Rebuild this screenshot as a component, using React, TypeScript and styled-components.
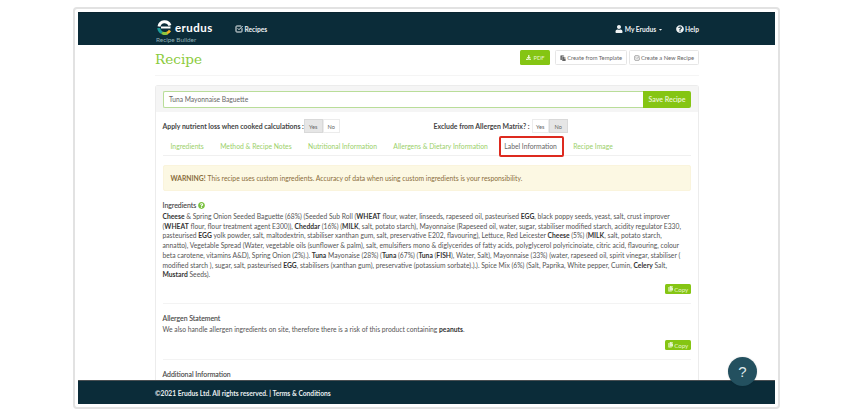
import React from "react";
import styled, { createGlobalStyle } from "styled-components";
import { FaUser, FaQuestionCircle, FaDownload, FaCopy, FaPaste, FaCaretDown } from "react-icons/fa";
import { SquareCheckBig } from "lucide-react";

const Global = createGlobalStyle`
  html, body { margin: 0; padding: 0; background: #fff; }
  * { box-sizing: border-box; }
  #root { width: 858px; height: 412px; overflow: hidden; font-family: "Lato", "Liberation Sans", sans-serif; }
`;
const Page = styled.div`
  width: 858px; height: 412px; padding: 7px 78px 3px 73px;
`;
const Frame = styled.div`
  width: 100%; height: 100%; border: 2px solid #e2e2e2; border-radius: 4px; padding: 3px;
  background: #fff;
`;
const Screen = styled.div`
  position: relative; height: 100%; display: flex; flex-direction: column; overflow: hidden;
`;
const Header = styled.header`
  flex: none; height: 33px; background: #0b2c39; display: flex; align-items: center;
  padding: 0 76px 0 79px; color: #f2f5f6; border-top: 1px solid #0a2531;
`;
const Brand = styled.div`
  display: flex; flex-direction: column; width: 78px; margin-top: 6px;
`;
const LogoRow = styled.div`
  display: flex; align-items: center; gap: 3px; height: 14px;
`;
const LogoWord = styled.span`
  font-size: 11.5px; font-weight: 700; letter-spacing: 0.45px; color: #fff; line-height: 14px;
`;
const BrandSub = styled.span`
  font-size: 6.4px; line-height: 8px; color: #8fb0b5; margin-top: 1px; margin-left: -1px;
`;
const NavLink = styled.span`
  display: inline-flex; align-items: center; gap: 1.5px; font-size: 6.6px; font-weight: 700; color: #f0f3f4;
  svg { flex: none; }
`;
const Spacer = styled.div`flex: 1;`;
const RightNav = styled.div`
  display: flex; align-items: center; gap: 13px;
`;
const Main = styled.main`
  flex: 1; min-height: 0; overflow: hidden; padding: 0 76px 0 77px;
`;
const TitleRow = styled.div`
  display: flex; justify-content: space-between; align-items: flex-start;
  height: 30px; padding-top: 5px;
`;
const Title = styled.h1`
  margin: 0; font-family: "DejaVu Serif", "Liberation Serif", serif; font-weight: 400; font-size: 13.6px;
  line-height: 18px; color: #8ccb3d;
`;
const Actions = styled.div`
  display: flex; align-items: center;
`;
const PdfButton = styled.span`
  display: inline-flex; align-items: center; gap: 2px; height: 15px; padding: 0 5.5px; background: #85c513; color: #e8f5cd;
  border-radius: 1.5px; font-size: 5.8px; margin-right: 3px;
`;
const GhostButton = styled.span`
  display: inline-flex; align-items: center; gap: 1px; height: 15px; padding: 0 4px; background: #fff; color: #666;
  border: 1px solid #e6e6e6; border-radius: 1.5px; font-size: 5.8px; margin-left: 2px;
`;
const TitleRule = styled.div`
  height: 1px; background: #f5f5f5; margin-bottom: 9px;
`;
const Panel = styled.section`
  border: 1px solid #ececec; border-bottom: 0; border-radius: 3px 3px 0 0; height: 320px;
`;
const PanelHead = styled.div`
  height: 26px; background: #f5f5f5; padding: 5px 7px 0; display: flex;
`;
const NameBox = styled.div`
  flex: 1; height: 16.5px; background: #fff; border: 1px solid #b9dd99; border-right: 0; border-radius: 2px 0 0 2px;
  font-size: 6.7px; line-height: 14.5px; padding-left: 5px; color: #666;
`;
const SaveButton = styled.span`
  width: 48px; height: 16.5px; background: #85c513; color: #e4f4c8; font-size: 7px; font-weight: 700;
  border-radius: 0 2px 2px 0; display: flex; align-items: center; justify-content: center;
`;
const PanelBody = styled.div`
  padding: 7px 7px 0 6.5px;
`;
const OptionRow = styled.div`
  display: flex; height: 14px; align-items: center;
`;
const OptionLabel = styled.span<{ $width: number }>`
  width: ${(p) => p.$width}px; font-size: 6.9px; font-weight: 700; color: #444; white-space: nowrap;
  text-align: right; flex: none;
`;
const Toggle = styled.div`
  display: flex; margin-left: 2px; flex: none;
`;
const ToggleItem = styled.span<{ $on?: boolean }>`
  width: ${(p) => (p.$on ? 18.5 : 17.5)}px; height: 14px; font-size: 5.6px; display: flex; align-items: center; justify-content: center;
  color: #666; border: 1px solid ${(p) => (p.$on ? "#d9d9d9" : "#ececec")}; background: ${(p) => (p.$on ? "#e6e6e6" : "#fff")};
`;
const Tabs = styled.nav`
  display: flex; height: 21px; margin-top: 2px; border-bottom: 1px solid #f0f0f0; position: relative;
`;
const Tab = styled.span<{ $active?: boolean }>`
  padding: 0 8px; font-size: 6.8px; line-height: 22px; height: 20px; white-space: nowrap; color: ${(p) => (p.$active ? "#666" : "#9bd06a")};
  margin-right: 0.4px; flex: none;
`;
const Highlight = styled.span`
  position: absolute; left: 336.5px; top: 1px; width: 65px; height: 21px; border: 2px solid #dd2a1f; border-radius: 2px;
`;
const Alert = styled.div`
  margin-top: 9px; height: 26px; background: #fcf8e3; border: 1px solid #faf4dc; border-radius: 2px; padding: 0 7px;
  display: flex; align-items: center; font-size: 6.78px; color: #8a6d3b; gap: 2px;
  strong { font-weight: 700; }
`;
const Section = styled.div<{ $height: number; $rule?: boolean }>`
  height: ${(p) => p.$height}px; border-bottom: ${(p) => (p.$rule === false ? "0" : "1px solid #f3f3f3")};
  padding-top: 9.5px; position: relative;
`;
const SectionTitle = styled.h4`
  margin: 0; display: flex; align-items: center; gap: 2px; font-size: 6.9px; line-height: 9px; font-weight: 400; color: #444;
  -webkit-text-stroke: 0.1px #444;
`;
const Body = styled.p`
  margin: 2.5px 0 0; font-size: 6.74px; line-height: 9.7px; color: #555; white-space: pre-line; width: 535px;
  b { font-weight: 700; color: #333; }
`;
const CopyButton = styled.span`
  position: absolute; right: 0; bottom: 9px; width: 26px; height: 10px; background: #85c513; color: #e4f4c8; font-size: 6.2px;
  border-radius: 1.5px; display: flex; align-items: center; justify-content: center; gap: 1px;
`;
const Footer = styled.footer`
  flex: none; height: 24px; background: #0b2c39; border-top: 1px solid #4a4f52; padding-left: 77px; display: flex; align-items: center;
  font-size: 6.7px; font-weight: 700; color: #e9eef0;
`;
const HelpBubble = styled.span`
  position: absolute; right: 18px; bottom: 18px; width: 29px; height: 29px; border-radius: 50%; background: #23505f;
  color: #dfe9ec; font-size: 15px; display: flex; align-items: center; justify-content: center;
  box-shadow: 0 0 2px rgba(0,0,0,.15);
  font-family: "Liberation Sans", sans-serif;
`;

const Logo = () => (
  <svg width="15" height="15" viewBox="0 0 30 30">
    <path d="M4 13 A11.5 11.5 0 0 1 26 11" fill="none" stroke="#fff" strokeWidth="6" />
    <path d="M8 15 H27" stroke="#fff" strokeWidth="4" />
    <path d="M3.5 16 A11.5 11.5 0 0 0 10 25.5" fill="none" stroke="#1d9c9c" strokeWidth="6" />
    <path d="M10 25.5 A11.5 11.5 0 0 0 21 26" fill="none" stroke="#8cc63f" strokeWidth="6" />
    <path d="M20 26 A11.5 11.5 0 0 0 26 21" fill="none" stroke="#f0b323" strokeWidth="5" />
  </svg>
);

export default function App() {
  return (
    <Page>
      <Global />
      <Frame>
        <Screen>
          <Header>
            <Brand>
              <LogoRow><Logo /><LogoWord>erudus</LogoWord></LogoRow>
              <BrandSub>Recipe Builder</BrandSub>
            </Brand>
            <NavLink><SquareCheckBig size={8} strokeWidth={3} />Recipes</NavLink>
            <Spacer />
            <RightNav>
              <NavLink><FaUser size={8} />My Erudus<FaCaretDown size={5} /></NavLink>
              <NavLink><FaQuestionCircle size={8} />Help</NavLink>
            </RightNav>
          </Header>
          <Main>
            <TitleRow>
              <Title>Recipe</Title>
              <Actions>
                <PdfButton><FaDownload size={5.5} />PDF</PdfButton>
                <GhostButton><FaPaste size={6} />Create from Template</GhostButton>
                <GhostButton><SquareCheckBig size={6} strokeWidth={2.5} />Create a New Recipe</GhostButton>
              </Actions>
            </TitleRow>
            <TitleRule />
            <Panel>
              <PanelHead>
                <NameBox>Tuna Mayonnaise Baguette</NameBox>
                <SaveButton>Save Recipe</SaveButton>
              </PanelHead>
              <PanelBody>
                <OptionRow>
                  <OptionLabel $width={139.5}>Apply nutrient loss when cooked calculations :</OptionLabel>
                  <Toggle><ToggleItem $on>Yes</ToggleItem><ToggleItem>No</ToggleItem></Toggle>
                  <OptionLabel $width={189.5}>Exclude from Allergen Matrix? :</OptionLabel>
                  <Toggle><ToggleItem>Yes</ToggleItem><ToggleItem $on>No</ToggleItem></Toggle>
                </OptionRow>
                <Tabs>
                  <Tab>Ingredients</Tab>
                  <Tab>Method &amp; Recipe Notes</Tab>
                  <Tab>Nutritional Information</Tab>
                  <Tab>Allergens &amp; Dietary Information</Tab>
                  <Tab $active>Label Information</Tab>
                  <Tab>Recipe Image</Tab>
                  <Highlight />
                </Tabs>
                <Alert><strong>WARNING!</strong> This recipe uses custom ingredients. Accuracy of data when using custom ingredients is your responsibility.</Alert>
                <Section $height={113}>
                  <SectionTitle>Ingredients <FaQuestionCircle size={7} color="#7cc242" /></SectionTitle>
                  <Body><b>Cheese</b> &amp; Spring Onion Seeded Baguette (68%) (Seeded Sub Roll (<b>WHEAT</b> flour, water, linseeds, rapeseed oil, pasteurised <b>EGG</b>, black poppy seeds, yeast, salt, crust improver
{"\n"}(<b>WHEAT</b> flour, flour treatment agent E300)), <b>Cheddar</b> (16%) (<b>MILK</b>, salt, potato starch), Mayonnaise (Rapeseed oil, water, sugar, stabiliser modified starch, acidity regulator E330,
{"\n"}pasteurised <b>EGG</b> yolk powder, salt, maltodextrin, stabiliser xanthan gum, salt, preservative E202, flavouring), Lettuce, Red Leicester <b>Cheese</b> (5%) (<b>MILK</b>, salt, potato starch,
{"\n"}annatto), Vegetable Spread (Water, vegetable oils (sunflower &amp; palm), salt, emulsifiers mono &amp; diglycerides of fatty acids, polyglycerol polyricinoiate, citric acid, flavouring, colour
{"\n"}beta carotene, vitamins A&amp;D), Spring Onion (2%).). <b>Tuna</b> Mayonaise (28%) (<b>Tuna</b> (67%) (<b>Tuna</b> (<b>FISH</b>), Water, Salt), Mayonnaise (33%) (water, rapeseed oil, spirit vinegar, stabiliser (
{"\n"}modified starch ), sugar, salt, pasteurised <b>EGG</b>, stabilisers (xanthan gum), preservative (potassium sorbate).).). Spice Mix (6%) (Salt, Paprika, White pepper, Cumin, <b>Celery</b> Salt,
{"\n"}<b>Mustard</b> Seeds).</Body>
                  <CopyButton><FaCopy size={5.5} />Copy</CopyButton>
                </Section>
                <Section $height={56}>
                  <SectionTitle>Allergen Statement</SectionTitle>
                  <Body>We also handle allergen ingredients on site, therefore there is a risk of this product containing <b>peanuts</b>.</Body>
                  <CopyButton><FaCopy size={5.5} />Copy</CopyButton>
                </Section>
                <Section $height={40} $rule={false}>
                  <SectionTitle>Additional Information</SectionTitle>
                </Section>
              </PanelBody>
            </Panel>
          </Main>
          <Footer>©2021 Erudus Ltd. All rights reserved. | Terms &amp; Conditions</Footer>
          <HelpBubble>?</HelpBubble>
        </Screen>
      </Frame>
    </Page>
  );
}
